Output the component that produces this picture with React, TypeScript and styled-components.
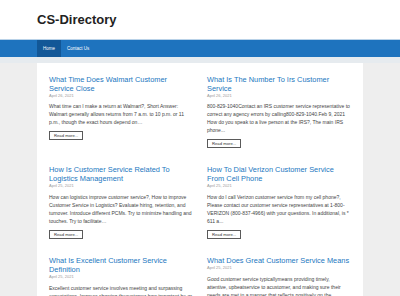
import styled, { createGlobalStyle } from "styled-components";

const Global = createGlobalStyle`
  html, body {
    margin: 0;
    padding: 0;
    background: #eeeeee;
    font-family: "Liberation Sans", Arial, sans-serif;
  }
`;

const posts = [
  {
    title: "What Time Does Walmart Customer Service Close",
    date: "April 26, 2021",
    excerpt:
      "What time can I make a return at Walmart?, Short Answer: Walmart generally allows returns from 7 a.m. to 10 p.m. or 11 p.m., though the exact hours depend on…",
  },
  {
    title: "What Is The Number To Irs Customer Service",
    date: "April 26, 2021",
    excerpt:
      "800-829-1040Contact an IRS customer service representative to correct any agency errors by calling800-829-1040.Feb 9, 2021 How do you speak to a live person at the IRS?, The main IRS phone...",
  },
  {
    title: "How Is Customer Service Related To Logistics Management",
    date: "April 25, 2021",
    excerpt:
      "How can logistics improve customer service?, How to improve Customer Service in Logistics? Evaluate hiring, retention, and turnover. Introduce different PCMs. Try to minimize handling and touches. Try to facilitate…",
  },
  {
    title: "How To Dial Verizon Customer Service From Cell Phone",
    date: "April 25, 2021",
    excerpt:
      "How do I call Verizon customer service from my cell phone?, Please contact our customer service representatives at 1-800-VERIZON (800-837-4966) with your questions. In additional, is * 611 a...",
  },
  {
    title: "What Is Excellent Customer Service Definition",
    date: "April 25, 2021",
    excerpt:
      "Excellent customer service involves meeting and surpassing expectations. Impress showing thecustomer how important he or she is to your business...",
  },
  {
    title: "What Does Great Customer Service Means",
    date: "April 25, 2021",
    excerpt:
      "Good customer service typicallymeans providing timely, attentive, upbeatservice to acustomer, and making sure their needs are met in a manner that reflects positively on the company...",
  },
];

const Header = styled.header`
  background: #ffffff;
  height: 39px;
  display: flex;
  align-items: center;
  padding-left: 37px;
`;

const SiteTitle = styled.h1`
  margin: 0;
  font-size: 13px;
  font-weight: 700;
  color: #222222;
`;

const NavBar = styled.nav`
  background: #1e73be;
  border-top: 1px solid #b9d2e8;
  height: 17px;
  display: flex;
  padding-left: 37px;
`;

const NavItem = styled.a<{ $active?: boolean }>`
  display: block;
  padding: 0 6px;
  line-height: 17px;
  font-size: 4.5px;
  color: #ffffff;
  text-decoration: none;
  background: ${({ $active }) => ($active ? "#125797" : "transparent")};
`;

const Band = styled.div`
  height: 6px;
  background: #e6ebef;
`;

const Main = styled.main`
  width: 326px;
  margin: 0 auto;
  background: #ffffff;
  box-sizing: border-box;
  padding: 11.5px 10px 20px 12px;
`;

const Grid = styled.div`
  display: grid;
  grid-template-columns: 144px 144px;
  column-gap: 14px;
  row-gap: 17.5px;
  align-items: start;
`;

const Card = styled.article`
  display: flex;
  flex-direction: column;
  align-items: flex-start;
`;

const PostTitle = styled.h2`
  margin: 0;
  font-size: 7.4px;
  line-height: 9px;
  font-weight: 400;
  color: #2277c0;
`;

const PostDate = styled.div`
  font-size: 4px;
  line-height: 5px;
  color: #9a9a9a;
`;

const Excerpt = styled.p`
  margin: 4.5px 0 0;
  font-size: 5px;
  line-height: 8.1px;
  color: #444444;
`;

const ReadMore = styled.a`
  margin-top: 4.5px;
  box-sizing: border-box;
  height: 9px;
  padding: 0 4px;
  border: 1px solid #5a5a5a;
  font-size: 4.2px;
  line-height: 7px;
  color: #333333;
  text-decoration: none;
  background: #ffffff;
`;

export default function App() {
  return (
    <>
      <Global />
      <Header>
        <SiteTitle>CS-Directory</SiteTitle>
      </Header>
      <NavBar>
        <NavItem $active href="#">
          Home
        </NavItem>
        <NavItem href="#">Contact Us</NavItem>
      </NavBar>
      <Band />
      <Main>
        <Grid>
          {posts.map((p) => (
            <Card key={p.title}>
              <PostTitle>{p.title}</PostTitle>
              <PostDate>{p.date}</PostDate>
              <Excerpt>{p.excerpt}</Excerpt>
              <ReadMore href="#">Read more...</ReadMore>
            </Card>
          ))}
        </Grid>
      </Main>
    </>
  );
}
